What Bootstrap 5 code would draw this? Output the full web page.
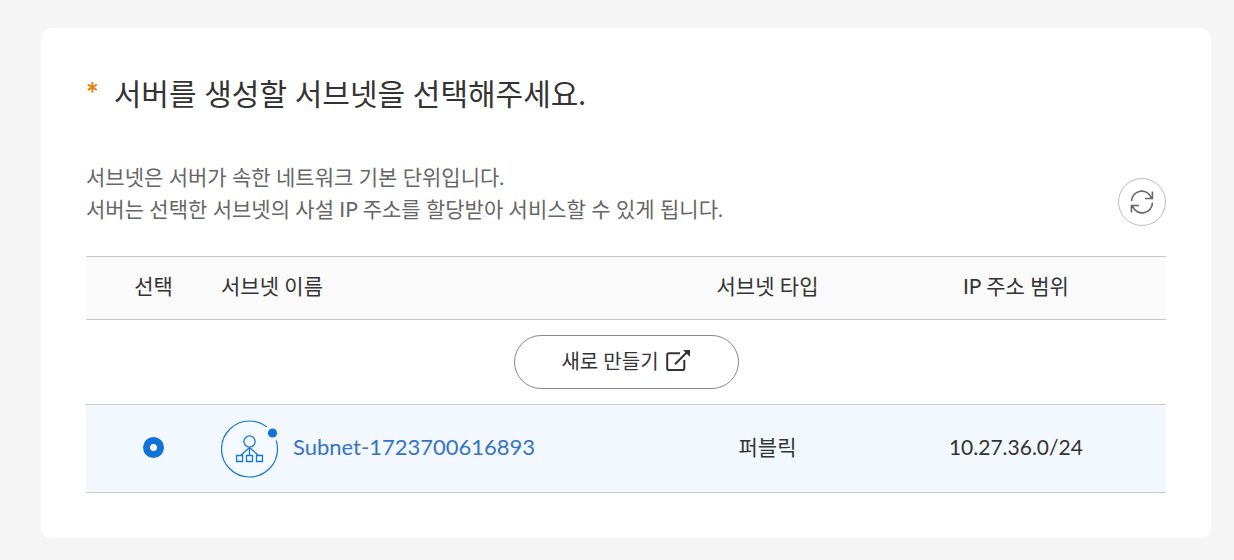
<!DOCTYPE html>
<html lang="ko">
<head>
<meta charset="utf-8">
<meta name="viewport" content="width=device-width, initial-scale=1">
<title>서브넷 선택</title>
<link rel="stylesheet" href="https://cdn.jsdelivr.net/npm/bootstrap@5.3.0/dist/css/bootstrap.min.css">
<style>
  body { background: #f5f5f5; color: #333; font-family: Lato, "Noto Sans CJK KR", sans-serif; font-size: 21px; line-height: 32px; }
  .page { padding: 28px 23px 22px 41px; }
  .panel { border-radius: 10px; padding: 44px 45px 45px; }
  .panel-title { font-size: 30px; line-height: 42px; gap: 15px; }
  .required { color: #e5820c; font-size: 30px; line-height: 42px; font-weight: 900; }
  .guide { color: #666; margin: 47px 0 1px; }
  .refresh { width: 48px; height: 48px; border: 1px solid #bbb; color: #666; }
  .subnets { margin-top: 30px; table-layout: fixed; --bs-table-bg: transparent; --bs-table-color: #333; }
  .subnets tr { border: solid #c8c8c8; border-width: 1px 0; }
  .subnets th, .subnets td { border: 0; padding: 0; font-weight: 400; }
  .subnets thead th { background: #fafafa; height: 63px; padding-bottom: 5px; vertical-align: middle; }
  .create-row td { height: 85px; }
  .subnets .picked-row td { background: #f2f8fe; height: 88px; padding-bottom: 3px; }
  .subnets .picked-row .name-col { padding-bottom: 0; }
  .col-pick { width: 12.5%; }
  .col-type { width: 18.2%; }
  .col-range { width: 27.8%; }
  .create { width: 225px; height: 54px; border: 1px solid #888; color: #333; font-size: 20px; line-height: 30px; gap: 7px; padding: 0 0 2px; }
  .pick { width: 21px; height: 21px; border: 0; background-color: #0f73d8; }
  .pick:checked { background: radial-gradient(circle, #fff 3px, #0f73d8 4px); }
  .subnet-link { color: #3573c6; font-size: 22px; padding-bottom: 3px; }
  .name-cell { gap: 14px; }
</style>
</head>
<body>
<main class="page container-fluid">
  <section class="panel bg-white">
    <h1 class="panel-title d-flex fw-normal m-0"><span class="required">*</span>서버를 생성할 서브넷을 선택해주세요.</h1>
    <div class="d-flex justify-content-between align-items-end">
      <p class="guide">서브넷은 서버가 속한 네트워크 기본 단위입니다.<br>서버는 선택한 서브넷의 사설 IP 주소를 할당받아 서비스할 수 있게 됩니다.</p>
      <button type="button" class="refresh btn bg-white rounded-circle p-0 d-flex align-items-center justify-content-center flex-shrink-0" aria-label="새로고침">
        <svg width="24" height="24" viewBox="0 0 24 24" fill="none" stroke="currentColor" stroke-width="1.6" aria-hidden="true"><path d="M1.5 11A10.3 10.3 0 0 1 21.5 8M22.4 1.5V8.5H15M22.5 12.5A10.3 10.3 0 0 1 2.5 16M1.4 22.5V15.5H9"/></svg>
      </button>
    </div>
    <table class="subnets table align-middle text-center mb-0">
      <thead>
        <tr>
          <th scope="col" class="col-pick">선택</th>
          <th scope="col" class="text-start">서브넷 이름</th>
          <th scope="col" class="col-type">서브넷 타입</th>
          <th scope="col" class="col-range">IP 주소 범위</th>
        </tr>
      </thead>
      <tbody>
        <tr class="create-row">
          <td colspan="4">
            <button type="button" class="create btn bg-white rounded-pill d-inline-flex align-items-center justify-content-center">새로 만들기
              <svg width="25" height="24" viewBox="0 0 25 24" fill="none" stroke="currentColor" stroke-width="2" aria-hidden="true"><path d="M14 4.2H3Q1.2 4.2 1.2 6V19.2Q1.2 21 3 21H16.5Q18.3 21 18.3 19.2V11M9 15.3L21 3.3"/><path d="M17 1H24V8Z" fill="currentColor" stroke="none"/></svg>
            </button>
          </td>
        </tr>
        <tr class="picked-row">
          <td><input class="pick form-check-input d-block mx-auto my-0" type="radio" name="subnet" id="subnet-1" checked aria-label="Subnet-1723700616893 선택"></td>
          <td class="name-col text-start">
            <div class="name-cell d-flex align-items-center">
              <svg width="58" height="58" viewBox="0 0 58 58" fill="none" stroke="#1479ce" aria-hidden="true"><circle cx="28.5" cy="29" r="28" fill="#f5faff" stroke-width="1.2"/><circle cx="51.5" cy="13" r="8.5" fill="#f2f8fe" stroke="none"/><circle cx="51.5" cy="13" r="4.6" fill="#0f73d8" stroke="none"/><g stroke-width="1.3"><circle cx="28.5" cy="21.5" r="5.6"/><path d="M28.5 27V35.5M28.5 27.5L20 35M28.5 27.5L37 35"/><path d="M15.6 35.5H21.6V41.5H15.6ZM25.5 35.5H31.5V41.5H25.5ZM35.5 35.5H41.5V41.5H35.5Z"/></g></svg>
              <a class="subnet-link text-decoration-none" href="#subnet-1">Subnet-1723700616893</a>
            </div>
          </td>
          <td>퍼블릭</td>
          <td>10.27.36.0/24</td>
        </tr>
      </tbody>
    </table>
  </section>
</main>
<script src="https://cdn.jsdelivr.net/npm/bootstrap@5.3.0/dist/js/bootstrap.bundle.min.js"></script>
</body>
</html>
